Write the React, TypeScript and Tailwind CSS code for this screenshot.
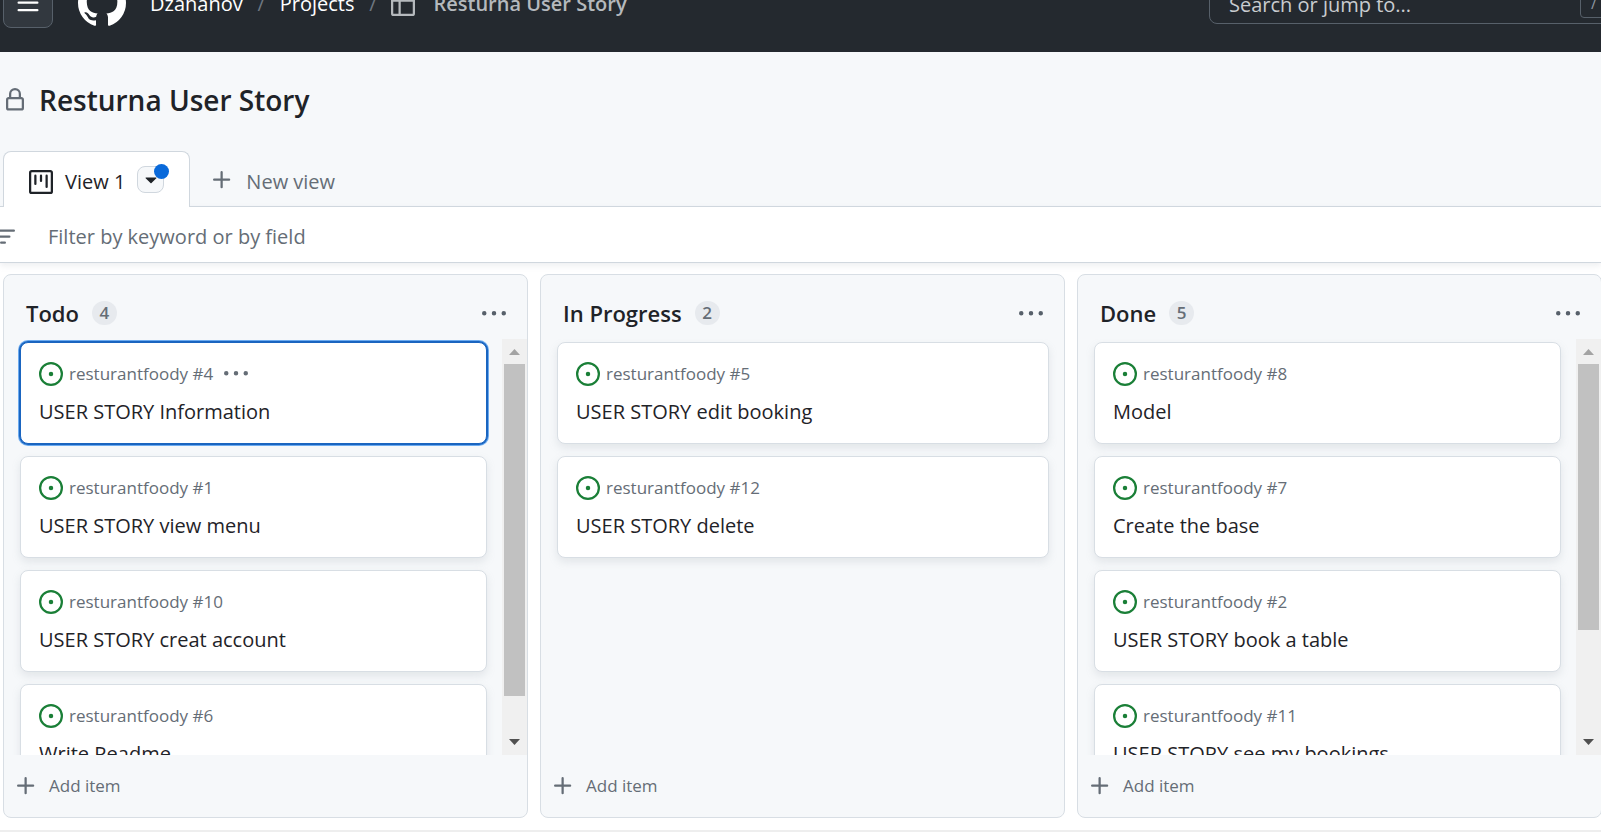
import { useLayoutEffect, useRef, useState } from "react";

type IconProps = { d: string; className?: string };

function Icon({ d, className = "size-6" }: IconProps) {
  return (
    <svg viewBox="0 0 16 16" fill="currentColor" aria-hidden="true" className={`shrink-0 ${className}`}>
      <path d={d} />
    </svg>
  );
}

const icons = {
  bars: "M1 2.75A.75.75 0 0 1 1.75 2h12.5a.75.75 0 0 1 0 1.5H1.75A.75.75 0 0 1 1 2.75Zm0 5A.75.75 0 0 1 1.75 7h12.5a.75.75 0 0 1 0 1.5H1.75A.75.75 0 0 1 1 7.75ZM1.75 12h12.5a.75.75 0 0 1 0 1.5H1.75a.75.75 0 0 1 0-1.5Z",
  github:
    "M8 0c4.42 0 8 3.58 8 8a8.013 8.013 0 0 1-5.45 7.59c-.4.08-.55-.17-.55-.38 0-.27.01-1.13.01-2.2 0-.75-.25-1.23-.54-1.48 1.78-.2 3.65-.88 3.65-3.95 0-.88-.31-1.59-.82-2.15.08-.2.36-1.02-.08-2.12 0 0-.67-.22-2.2.82-.64-.18-1.32-.27-2-.27-.68 0-1.36.09-2 .27-1.53-1.03-2.2-.82-2.2-.82-.44 1.1-.16 1.92-.08 2.12-.51.56-.82 1.28-.82 2.15 0 3.06 1.86 3.75 3.64 3.95-.23.2-.44.55-.51 1.07-.46.21-1.61.55-2.33-.66-.15-.24-.6-.83-1.23-.82-.67.01-.27.38.01.53.34.19.73.9.82 1.13.16.45.68 1.31 2.69.94 0 .67.01 1.3.01 1.49 0 .21-.15.45-.55.38A7.995 7.995 0 0 1 0 8c0-4.42 3.58-8 8-8Z",
  table:
    "M0 1.75C0 .784.784 0 1.75 0h12.5C15.216 0 16 .784 16 1.75v12.5A1.75 1.75 0 0 1 14.25 16H1.75A1.75 1.75 0 0 1 0 14.25ZM6.5 6.5v8h7.75a.25.25 0 0 0 .25-.25V6.5Zm8-1.5V1.75a.25.25 0 0 0-.25-.25H6.5V5Zm-13 1.5v7.75c0 .138.112.25.25.25H5v-8ZM5 5V1.5H1.75a.25.25 0 0 0-.25.25V5Z",
  lock: "M4 4a4 4 0 0 1 8 0v2h.25c.966 0 1.75.784 1.75 1.75v5.5A1.75 1.75 0 0 1 12.25 15h-8.5A1.75 1.75 0 0 1 2 13.25v-5.5C2 6.784 2.784 6 3.75 6H4Zm8.25 3.5h-8.5a.25.25 0 0 0-.25.25v5.5c0 .138.112.25.25.25h8.5a.25.25 0 0 0 .25-.25v-5.5a.25.25 0 0 0-.25-.25ZM10.5 6V4a2.5 2.5 0 1 0-5 0v2Z",
  project:
    "M1.75 0h12.5C15.216 0 16 .784 16 1.75v12.5A1.75 1.75 0 0 1 14.25 16H1.75A1.75 1.75 0 0 1 0 14.25V1.75C0 .784.784 0 1.75 0ZM1.5 1.75v12.5c0 .138.112.25.25.25h12.5a.25.25 0 0 0 .25-.25V1.75a.25.25 0 0 0-.25-.25H1.75a.25.25 0 0 0-.25.25ZM11.75 3a.75.75 0 0 1 .75.75v7.5a.75.75 0 0 1-1.5 0v-7.5a.75.75 0 0 1 .75-.75Zm-8.25.75a.75.75 0 0 1 1.5 0v5.5a.75.75 0 0 1-1.5 0ZM8 3a.75.75 0 0 1 .75.75v3.5a.75.75 0 0 1-1.5 0v-3.5A.75.75 0 0 1 8 3Z",
  triangle: "m4.427 7.427 3.396 3.396a.25.25 0 0 0 .354 0l3.396-3.396A.25.25 0 0 0 11.396 7H4.604a.25.25 0 0 0-.177.427Z",
  plus: "M7.75 2a.75.75 0 0 1 .75.75V7h4.25a.75.75 0 0 1 0 1.5H8.5v4.25a.75.75 0 0 1-1.5 0V8.5H2.75a.75.75 0 0 1 0-1.5H7V2.75A.75.75 0 0 1 7.75 2Z",
  filter:
    "M.75 3h14.5a.75.75 0 0 1 0 1.5H.75a.75.75 0 0 1 0-1.5ZM3 7.75A.75.75 0 0 1 3.75 7h8.5a.75.75 0 0 1 0 1.5h-8.5A.75.75 0 0 1 3 7.75Zm3 4a.75.75 0 0 1 .75-.75h2.5a.75.75 0 0 1 0 1.5h-2.5a.75.75 0 0 1-.75-.75Z",
  kebab:
    "M8 9a1.5 1.5 0 1 0 0-3 1.5 1.5 0 0 0 0 3ZM1.5 9a1.5 1.5 0 1 0 0-3 1.5 1.5 0 0 0 0 3Zm13 0a1.5 1.5 0 1 0 0-3 1.5 1.5 0 0 0 0 3Z",
  issue:
    "M8 9.5a1.5 1.5 0 1 0 0-3 1.5 1.5 0 0 0 0 3ZM8 0a8 8 0 1 1 0 16A8 8 0 0 1 8 0ZM1.5 8a6.5 6.5 0 1 0 13 0 6.5 6.5 0 0 0-13 0Z",
};

type Item = { number: number; title: string };
type ColumnData = { name: string; items: Item[] };

const columns: ColumnData[] = [
  {
    name: "Todo",
    items: [
      { number: 4, title: "USER STORY Information" },
      { number: 1, title: "USER STORY view menu" },
      { number: 10, title: "USER STORY creat account" },
      { number: 6, title: "Write Readme" },
    ],
  },
  {
    name: "In Progress",
    items: [
      { number: 5, title: "USER STORY edit booking" },
      { number: 12, title: "USER STORY delete" },
    ],
  },
  {
    name: "Done",
    items: [
      { number: 8, title: "Model" },
      { number: 7, title: "Create the base" },
      { number: 2, title: "USER STORY book a table" },
      { number: 11, title: "USER STORY see my bookings" },
      { number: 3, title: "USER STORY log in" },
    ],
  },
];

function Header() {
  return (
    <header className="-mt-[46px] flex h-[98px] shrink-0 items-center bg-[#24292f] pl-[3px] text-xl text-white">
      <button
        type="button"
        aria-label="Open menu"
        className="flex size-[50px] shrink-0 items-center justify-center rounded-lg border border-[#57606a] bg-[#32383f]"
      >
        <Icon d={icons.bars} />
      </button>
      <a href="#home" aria-label="Homepage" className="ml-[25px]">
        <Icon d={icons.github} className="size-12" />
      </a>
      <nav aria-label="Breadcrumb" className="ml-6 flex shrink-0 items-center pt-[2px]">
        <a href="#owner">Dzahanov</a>
        <span className="w-[37px] text-center text-[#6e7781]">/</span>
        <a href="#projects">Projects</a>
        <span className="w-[37px] text-center text-[#6e7781]">/</span>
        <a href="#project" className="flex items-center gap-[18px] font-semibold text-[#b5b9bd]">
          <Icon d={icons.table} />
          Resturna User Story
        </a>
      </nav>
      <div className="-mr-12 ml-auto flex h-[42px] w-[440px] shrink-0 items-center rounded-lg border border-[#57606a] pr-10 pl-[19px]">
        <input
          type="search"
          aria-label="Search"
          placeholder="Search or jump to..."
          className="min-w-0 flex-1 bg-transparent pt-[3px] outline-none placeholder:text-[#c9cccf]"
        />
        <kbd className="flex h-[30px] w-7 shrink-0 items-center justify-center rounded border border-[#57606a] font-[inherit] text-base text-[#8c959f]">
          /
        </kbd>
      </div>
    </header>
  );
}

function Tabs() {
  return (
    <div className="relative z-20 flex h-[55px] shrink-0 items-stretch pl-[3px] text-xl">
      <div className="-mb-px flex items-center gap-3 rounded-t-lg border border-b-0 border-[#d0d7de] bg-white px-[25px] pt-1">
        <Icon d={icons.project} className="size-6 text-[#1f2328]" />
        <span className="pt-px">View 1</span>
        <button
          type="button"
          aria-label="View options"
          className="relative mb-[5px] flex size-[27px] items-center justify-center rounded-lg border border-[#d0d7de] bg-[#f6f8fa]"
        >
          <Icon d={icons.triangle} />
          <span className="absolute -top-[3px] -right-[6px] size-[15px] rounded-full bg-[#0969da]" />
        </button>
      </div>
      <button type="button" className="ml-5 flex items-center gap-3 pt-1 text-[#656d76]">
        <Icon d={icons.plus} className="mb-px size-6" />
        <span className="pt-[2px]">New view</span>
      </button>
    </div>
  );
}

function Card({ item, selected }: { item: Item; selected: boolean }) {
  return (
    <article
      className={`h-[102px] shrink-0 rounded-lg border bg-white px-[18px] pt-[19px] ${
        selected
          ? "border-[#1a65c0] shadow-[0_0_0_1px_#1a65c0,0_0_0_2px_#6cabf0]"
          : "border-[#d8dee4] shadow-[0_4px_8px_rgba(140,149,159,0.18)]"
      }`}
    >
      <div className="flex h-6 items-center text-[17px] text-[#656d76]">
        <Icon d={icons.issue} className="size-6 text-[#1a7f37]" />
        <span className="ml-[6px] pb-px">resturantfoody #{item.number}</span>
        {selected && (
          <button type="button" aria-label="Item actions" className="ml-[11px]">
            <Icon d={icons.kebab} />
          </button>
        )}
      </div>
      <h3 className="mt-3 h-7 text-xl leading-7 whitespace-nowrap">{item.title}</h3>
    </article>
  );
}

function Arrow({ up }: { up?: boolean }) {
  return (
    <svg
      viewBox="0 0 25 25"
      aria-hidden="true"
      className={`size-[25px] shrink-0 ${up ? "text-[#a3a3a3]" : "text-[#505050]"}`}
    >
      <path fill="currentColor" d={up ? "M7 16 L12.500 10 L18 16 Z" : "M7 9 L18 9 L12.500 15 Z"} />
    </svg>
  );
}

function CardList({ items, selectedNumber }: { items: Item[]; selectedNumber: number }) {
  const ref = useRef<HTMLDivElement>(null);
  const [view, setView] = useState({ size: 1, start: 0 });

  const measure = () => {
    const el = ref.current;
    if (el) setView({ size: el.clientHeight / el.scrollHeight, start: el.scrollTop / el.scrollHeight });
  };

  useLayoutEffect(() => {
    measure();
    window.addEventListener("resize", measure);
    return () => window.removeEventListener("resize", measure);
  }, []);

  return (
    <div className="flex min-h-0 flex-1">
      <div
        ref={ref}
        onScroll={measure}
        className="flex min-w-0 flex-1 flex-col gap-3 overflow-y-auto pt-[3px] pr-[15px] pb-3 pl-4 [scrollbar-width:none]"
      >
        {items.map((item) => (
          <Card key={item.number} item={item} selected={item.number === selectedNumber} />
        ))}
      </div>
      {view.size < 1 && (
        <div className="flex w-[25px] shrink-0 flex-col bg-[#f0f0f0]">
          <Arrow up />
          <div className="min-h-0 flex-1 px-[2px]">
            <div style={{ height: `${view.start * 100}%` }} />
            <div className="bg-[#c1c1c1]" style={{ height: `${view.size * 100}%` }} />
          </div>
          <Arrow />
        </div>
      )}
    </div>
  );
}

function Column({ column }: { column: ColumnData }) {
  return (
    <section className="flex min-h-0 min-w-0 flex-col overflow-hidden rounded-lg border border-[#d8dee4] bg-[#f6f8fa]">
      <div className="flex h-16 shrink-0 items-center pt-[13px] pr-[21px] pl-[22px]">
        <h2 className="text-[22px] font-semibold">{column.name}</h2>
        <span className="mb-[2px] ml-[13px] flex h-6 w-[25px] items-center justify-center rounded-full bg-[#e7eaee] text-[17px] font-semibold text-[#656d76]">
          {column.items.length}
        </span>
        <button type="button" aria-label={`${column.name} actions`} className="ml-auto text-[#57606a]">
          <Icon d={icons.kebab} />
        </button>
      </div>
      <CardList items={column.items} selectedNumber={4} />
      <button type="button" className="flex h-[62px] shrink-0 items-center gap-[11px] pl-[10px] text-[17px] text-[#656d76]">
        <Icon d={icons.plus} />
        Add item
      </button>
    </section>
  );
}

export default function App() {
  return (
    <div className="flex h-screen flex-col overflow-hidden bg-[#f6f8fa] font-['Open_Sans',sans-serif] text-[#1f2328]">
      <Header />
      <div className="flex h-[99px] shrink-0 items-center gap-3 pb-[4px] pl-[3px]">
        <Icon d={icons.lock} className="size-6 text-[#656d76]" />
        <h1 className="text-[28px] font-semibold">Resturna User Story</h1>
      </div>
      <Tabs />
      <div className="relative z-10 flex h-[57px] shrink-0 items-center border-y border-[#d0d7de] bg-white pt-1 shadow-[0_3px_6px_rgba(140,149,159,0.15)]">
        <Icon d={icons.filter} className="-ml-[9px] size-6 text-[#656d76]" />
        <input
          type="text"
          aria-label="Filter by keyword or by field"
          placeholder="Filter by keyword or by field"
          className="ml-[33px] flex-1 bg-transparent text-xl outline-none placeholder:text-[#656d76]"
        />
      </div>
      <main className="-mr-px grid min-h-0 flex-1 grid-cols-3 grid-rows-1 gap-3 border-b-2 border-[#eeeeee] bg-white pt-[11px] pb-3 pl-[3px]">
        {columns.map((column) => (
          <Column key={column.name} column={column} />
        ))}
      </main>
    </div>
  );
}
